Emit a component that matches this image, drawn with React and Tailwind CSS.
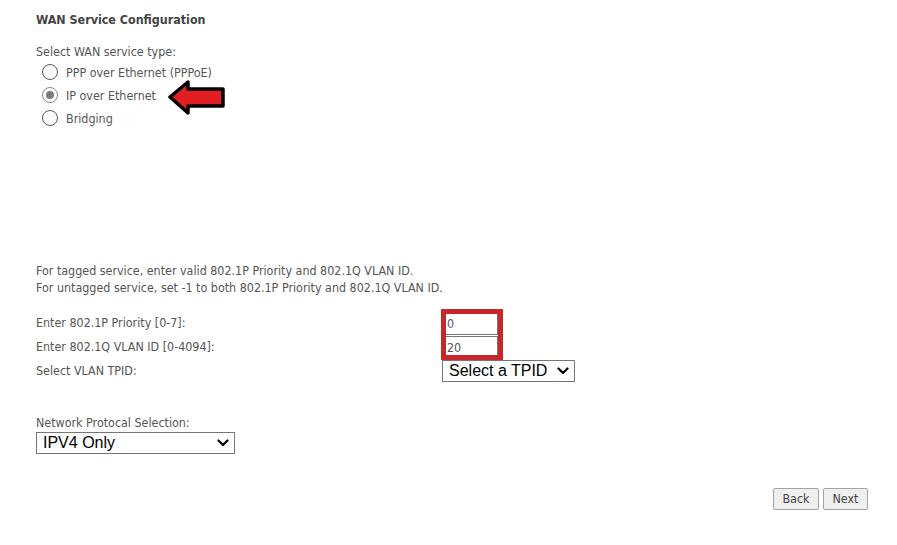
import { useState } from "react";

const font = {
  fontFamily: '"DejaVu Sans Condensed", "Noto Sans", "DejaVu Sans", sans-serif',
};

function Radio({ checked, label, onClick }) {
  return (
    <div className="flex h-[23px] items-center cursor-pointer" onClick={onClick}>
      <span
        className={`ml-[6px] mb-[4px] flex h-[16px] w-[16px] items-center justify-center rounded-full border bg-white ${
          checked ? "border-[#8a8a8a]" : "border-[#555]"
        }`}
      >
        {checked && <span className="h-[8px] w-[8px] rounded-full bg-[#7c7c7c]" />}
      </span>
      <span className="ml-[8px]">{label}</span>
    </div>
  );
}

function Chevron() {
  return (
    <svg width="12" height="8" viewBox="0 0 12 8" className="pointer-events-none absolute top-1/2 -translate-y-1/2 right-[6px]">
      <path d="M1.5 1.5 L6 6 L10.5 1.5" fill="none" stroke="#000" strokeWidth="2.2" strokeLinecap="round" strokeLinejoin="round" />
    </svg>
  );
}

function Select({ width, value, options, onChange }) {
  return (
    <div className={`relative ${width} h-[22px]`}>
      <select
        value={value}
        onChange={(e) => onChange(e.target.value)}
        className="h-full w-full appearance-none border border-[#767676] bg-white pl-[6px] text-[16px] leading-[20px] text-black outline-none"
        style={{ fontFamily: '"Liberation Sans", Arial, sans-serif' }}
      >
        {options.map((o) => (
          <option key={o}>{o}</option>
        ))}
      </select>
      <Chevron />
    </div>
  );
}

export default function App() {
  const [service, setService] = useState("ipoe");
  const [priority, setPriority] = useState("0");
  const [vlan, setVlan] = useState("20");
  const [tpid, setTpid] = useState("Select a TPID");
  const [proto, setProto] = useState("IPV4 Only");

  return (
    <div className="min-h-screen bg-white pl-[36px] pt-[12px] text-[12.4px] text-[#555]" style={font}>
      <div className="font-bold leading-[15px] text-[#444]">WAN Service Configuration</div>

      <div className="mt-[17px] leading-[15px]">Select WAN service type:</div>

      {/* service type radios + annotation arrow */}
      <div className="relative mt-[3px]">
        <Radio label="PPP over Ethernet (PPPoE)" checked={service === "pppoe"} onClick={() => setService("pppoe")} />
        <Radio label="IP over Ethernet" checked={service === "ipoe"} onClick={() => setService("ipoe")} />
        <Radio label="Bridging" checked={service === "bridge"} onClick={() => setService("bridge")} />
        <svg width="60" height="36" viewBox="0 0 60 36" className="absolute left-[131px] top-[18px]">
          <polygon
            points="3,17 21,2 21,9 56,9 56,26 21,26 21,33"
            fill="#e11f22"
            stroke="#000"
            strokeWidth="3.5"
            strokeLinejoin="round"
          />
        </svg>
      </div>

      <div className="mt-[131px] leading-[17px]">
        <div>For tagged service, enter valid 802.1P Priority and 802.1Q VLAN ID.</div>
        <div>For untagged service, set -1 to both 802.1P Priority and 802.1Q VLAN ID.</div>
      </div>

      {/* VLAN fields */}
      <div className="relative mt-[15px] grid grid-cols-[406px_auto] auto-rows-[24px] items-center">
        <div>Enter 802.1P Priority [0-7]:</div>
        <input
          value={priority}
          onChange={(e) => setPriority(e.target.value)}
          className="ml-[2px] h-[23px] w-[54px] border border-[#767676] bg-white px-[2px] text-[12.4px] text-[#555] outline-none"
        />
        <div>Enter 802.1Q VLAN ID [0-4094]:</div>
        <input
          value={vlan}
          onChange={(e) => setVlan(e.target.value)}
          className="ml-[2px] h-[23px] w-[54px] border border-[#767676] bg-white px-[2px] text-[12.4px] text-[#555] outline-none"
        />
        <div>Select VLAN TPID:</div>
        <Select width="w-[133px]" value={tpid} onChange={setTpid} options={["Select a TPID", "0x8100", "0x88a8", "0x9100"]} />
        <div className="pointer-events-none absolute left-[405px] top-[-2px] h-[51px] w-[62px] border-[5px] border-[#c8252c]" />
      </div>

      <div className="mt-[32px] leading-[15px]">Network Protocal Selection:</div>
      <div className="mt-[2px]">
        <Select width="w-[199px]" value={proto} onChange={setProto} options={["IPV4 Only", "IPV4&IPV6(Dual Stack)", "IPV6 Only"]} />
      </div>

      <div className="mt-[34px] flex justify-end gap-[4px] pr-[29px]">
        <button className="h-[22px] w-[46px] rounded-[2px] border border-[#a3a3a3] bg-[#efefef] text-[12.4px] text-[#444]">
          Back
        </button>
        <button className="h-[22px] w-[45px] rounded-[2px] border border-[#a3a3a3] bg-[#efefef] text-[12.4px] text-[#444]">
          Next
        </button>
      </div>
    </div>
  );
}
